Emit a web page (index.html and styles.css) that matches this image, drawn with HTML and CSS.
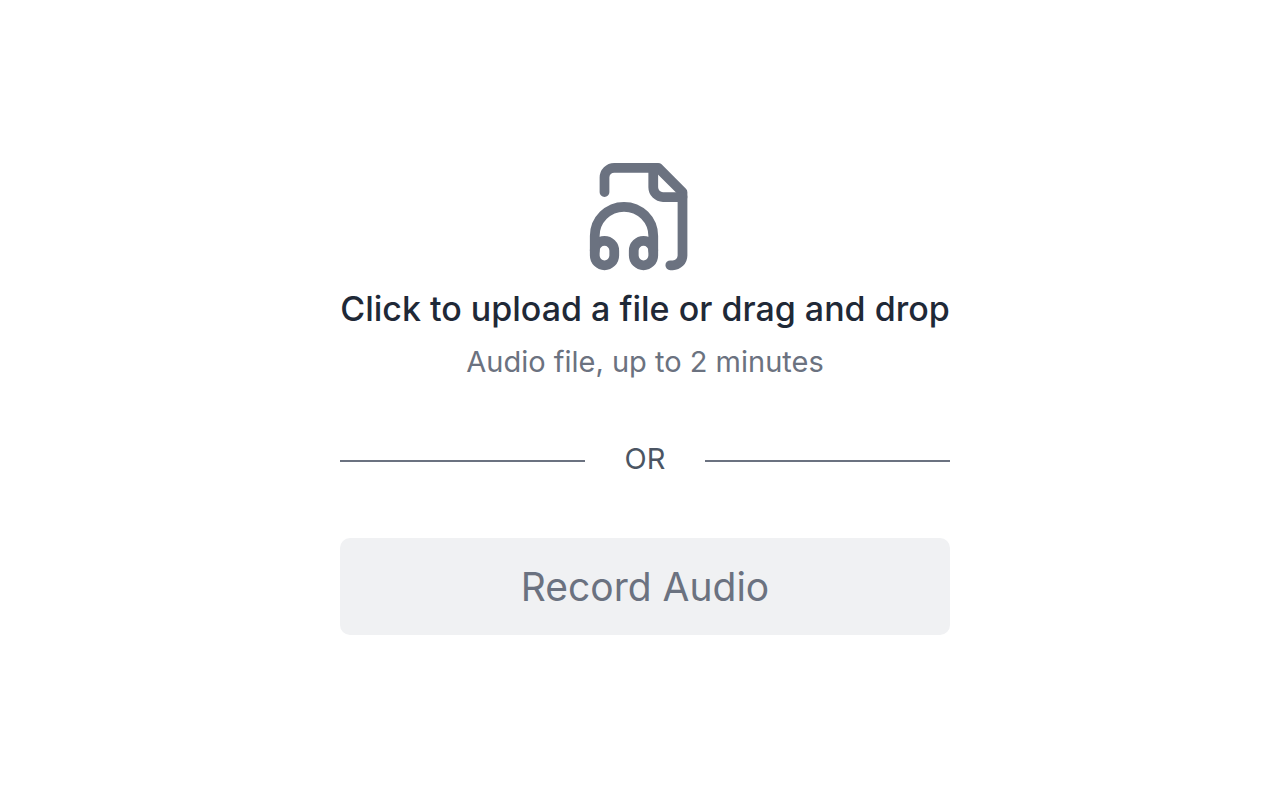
FILE: index.html
```html
<!DOCTYPE html>
<html lang="en">
<head>
<meta charset="utf-8">
<meta name="viewport" content="width=device-width, initial-scale=1">
<title>Upload audio</title>
<link rel="stylesheet" href="styles.css">
</head>
<body>
<main class="panel">
  <button type="button" class="dropzone">
    <svg class="icon" viewBox="0 0 24 24" fill="none" stroke="currentColor" stroke-width="2" stroke-linecap="round" stroke-linejoin="round" aria-hidden="true">
      <path d="M4 7V4a2 2 0 0 1 2-2h9l5 5v13a2 2 0 0 1-2 2h-.5"/>
      <path d="M14 2v4a2 2 0 0 0 2 2h4"/>
      <path d="M10 20v-1a2 2 0 1 1 4 0v1a2 2 0 1 1-4 0Z"/>
      <path d="M6 20v-1a2 2 0 1 0-4 0v1a2 2 0 1 0 4 0Z"/>
      <path d="M2 19v-3a6 6 0 0 1 12 0v3"/>
    </svg>
    <span class="title">Click to upload a file or drag and drop</span>
    <span class="hint">Audio file, up to 2 minutes</span>
  </button>
  <div class="divider"><span class="divider-label">OR</span></div>
  <button type="button" class="record">Record Audio</button>
</main>
</body>
</html>
```
FILE: styles.css
```css
* { box-sizing: border-box; }
body {
  margin: 0;
  min-height: 100vh;
  display: flex;
  flex-direction: column;
  align-items: center;
  background: #fff;
  font-family: Inter, sans-serif;
}
button {
  border: 0;
  font-family: inherit;
  cursor: pointer;
}
.panel {
  display: flex;
  flex-direction: column;
  margin-left: 10px;
  padding: 158px 0 40px;
}
.dropzone {
  display: flex;
  flex-direction: column;
  align-items: center;
  padding: 0;
  background: none;
}
.icon {
  width: 117px;
  height: 117px;
  margin-right: 3px;
  color: #6b7280;
}
.title {
  margin-top: 12px;
  font-size: 34px;
  line-height: 44px;
  font-weight: 500;
  color: #1f2937;
}
.hint {
  margin-top: 9px;
  font-size: 29px;
  line-height: 44px;
  color: #6b7280;
}
.divider {
  display: flex;
  align-items: center;
  gap: 40px;
  margin: 53px 0;
  font-size: 29px;
  line-height: 44px;
  color: #4b5563;
}
.divider-label {
  padding-bottom: 4px;
}
.divider::before,
.divider::after {
  content: "";
  flex: 1;
  height: 2px;
  background: #6b7280;
}
.record {
  padding: 24px;
  border-radius: 10px;
  background: #f0f1f3;
  font-size: 39px;
  line-height: 49px;
  color: #6b7280;
}
```
